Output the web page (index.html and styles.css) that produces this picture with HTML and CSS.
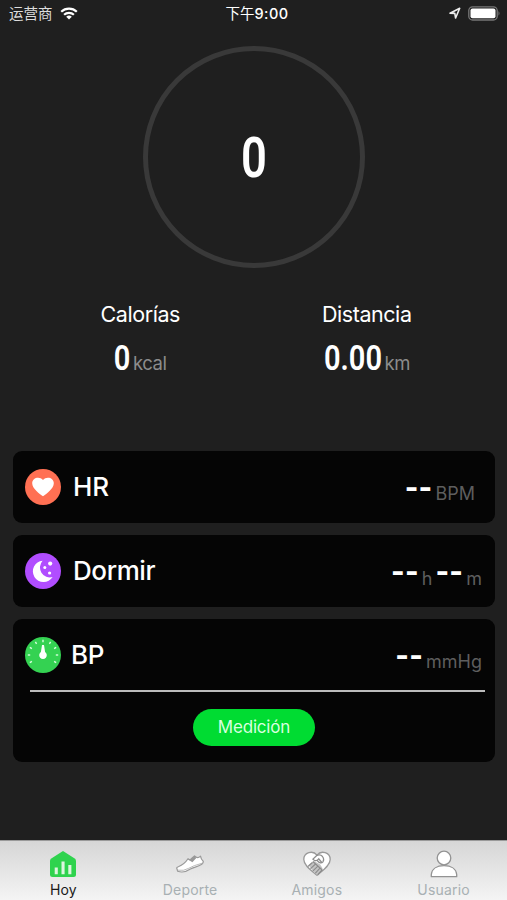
FILE: index.html
```html
<!DOCTYPE html>
<html lang="es">
<head>
<meta charset="utf-8">
<title>Hoy</title>
<link rel="stylesheet" href="styles.css">
</head>
<body>
<div class="screen">
  <header class="status">
    <div class="carrier"><span>运营商</span>
      <svg width="18" height="13" viewBox="0 0 18 13"><g fill="none" stroke="#fff" stroke-width="2.2"><path d="M1.2 4.7A11.2 11.2 0 0 1 16.8 4.7"/><path d="M4.1 7.8A7 7 0 0 1 13.9 7.8"/></g><path d="M6.2 9.8A4 4 0 0 1 11.8 9.8L9 12.6Z" fill="#fff"/></svg>
    </div>
    <div class="time">下午<b>9:00</b></div>
    <div class="power">
      <svg width="12" height="12" viewBox="0 0 12 12"><path d="M1 6.2L10.7 1.3L6.6 11L5.8 6.4Z" fill="none" stroke="#eee" stroke-width="1.6" stroke-linejoin="round"/></svg>
      <svg width="33" height="15" viewBox="0 0 33 15"><rect x=".8" y=".8" width="28.4" height="13.2" rx="3.8" fill="none" stroke="#777" stroke-width="1.3"/><rect x="2.5" y="2.5" width="25" height="9.8" rx="2" fill="#fff"/><path d="M30.5 5Q32.5 7.3 30.5 9.8Z" fill="#777"/></svg>
    </div>
  </header>

  <section class="ring"><span class="steps">0</span></section>

  <section class="stats">
    <div class="stat"><div class="label">Calorías</div><div class="value"><span class="num zero">0</span><span class="unit">kcal</span></div></div>
    <div class="stat"><div class="label">Distancia</div><div class="value"><span class="num dist">0.00</span><span class="unit">km</span></div></div>
  </section>

  <main class="cards">
    <section class="card">
      <div class="row">
        <svg class="badge" viewBox="0 0 36 36"><circle cx="18" cy="18" r="18" fill="#ff7053"/><path d="M18 27.2C14.5 25 7.2 19.5 7.2 14.3C7.2 8.6 14.5 6.8 18 11C21.5 6.8 28.8 8.6 28.8 14.3C28.8 19.5 21.5 25 18 27.2Z" fill="#fff"/></svg>
        <h2>HR</h2>
        <div class="reading bpm"><span class="dash">--</span><span class="measure">BPM</span></div>
      </div>
    </section>
    <section class="card">
      <div class="row">
        <svg class="badge" viewBox="0 0 36 36"><circle cx="18" cy="18" r="18" fill="#b14dff"/><path d="M17.6 7.7A10.7 10.7 0 1 0 27.6 24.1A10 10 0 0 1 17.6 7.7Z" fill="#fff"/><g fill="#fff"><circle cx="25.2" cy="10.6" r="2.1"/><circle cx="19.8" cy="14.5" r="1.5"/><circle cx="24.6" cy="20" r="1.6"/></g></svg>
        <h2 class="sleep">Dormir</h2>
        <div class="reading"><span class="dash">--</span><span class="measure low">h</span><span class="dash second">--</span><span class="measure low">m</span></div>
      </div>
    </section>
    <section class="card tall">
      <div class="row">
        <svg class="badge" viewBox="0 0 36 36"><circle cx="18" cy="18" r="18" fill="#34d252"/><g stroke="#d9ffdf" stroke-width="1.4"><path d="M18 2.8V5.2"/><path d="M18 2.8V5.2" transform="rotate(30 18 18)"/><path d="M18 2.8V5.2" transform="rotate(60 18 18)"/><path d="M18 2.8V5.2" transform="rotate(90 18 18)"/><path d="M18 2.8V5.2" transform="rotate(120 18 18)"/><path d="M18 2.8V5.2" transform="rotate(-30 18 18)"/><path d="M18 2.8V5.2" transform="rotate(-60 18 18)"/><path d="M18 2.8V5.2" transform="rotate(-90 18 18)"/><path d="M18 2.8V5.2" transform="rotate(-120 18 18)"/></g><path d="M17 8H19L20.1 15A3.8 3.8 0 1 1 15.9 15Z" fill="#fff"/></svg>
        <h2 class="bp">BP</h2>
        <div class="reading"><span class="dash">--</span><span class="measure">mmHg</span></div>
      </div>
      <hr>
      <button>Medición</button>
    </section>
  </main>

  <nav class="tabs">
    <a class="tab active"><svg width="28" height="28" viewBox="0 0 28 28"><path d="M14 1L25.7 8.6Q27 9.5 27 11V24.5Q27 27 24.5 27H3.5Q1 27 1 24.5V11Q1 9.5 2.3 8.6Z" fill="#2fd34e"/><path d="M5.7 17.5H8.8V24.3H5.7ZM12.5 11.5H15.6V24.3H12.5ZM19.3 15H22.4V24.3H19.3Z" fill="#ddf6df"/></svg><span>Hoy</span></a>
    <a class="tab"><svg width="28" height="28" viewBox="0 0 28 28"><path d="M1 19Q.2 17.4 2.3 16.7Q8.5 14.2 12 8.7Q13.2 10.3 14.7 9.3L18.5 6Q21.5 9 24.5 6.1Q25 9.3 27.2 11.2Q27.6 13 25.8 14.2C21 17.3 18 16.8 14.4 19.1C10 22.1 5.5 22.6 1.7 21.3Z" fill="#fff" stroke="#999" stroke-width="1.2" stroke-linejoin="round"/><path d="M11.6 9.2Q13 10.5 14.7 9.3L18.5 6L20.3 8L16.4 12.3Z" fill="#999"/><path d="M1.3 20.2Q8 21.2 12.5 18.4T26.8 13" fill="none" stroke="#aaa" stroke-width=".8"/></svg><span>Deporte</span></a>
    <a class="tab"><svg width="28" height="28" viewBox="0 0 28 28"><path d="M14 25.2C8.5 20.7 .8 15.7 .8 9.4C.8 2.6 9.7-.3 14 5.2C18.3-.3 27.2 2.6 27.2 9.4C27.2 15.7 19.5 20.7 14 25.2Z" fill="#fff" stroke="#999" stroke-width="1.3"/><path d="M5.5 15L10.6 10.8L17 14.2L19.7 18.5L14.4 25L10.5 22Z" fill="#c4c4c4"/><g fill="none" stroke="#8c8c8c" stroke-width="1.2" stroke-linecap="round"><path d="M14 5.2L9.8 9.2Q12.8 12.2 15.7 8.8L18.8 12.5M5.5 16L9.2 12.8M7.8 18.4L12 14.5M10.2 20.6L14.6 16.4M12.6 22.8L17 18.2M15 24.5L19 20M10.4 12L19.2 20M14.2 10.5Q17.5 14.5 20 11.8Q21.6 9.3 19.5 6.5Q17.5 4.2 14.5 5.3"/></g></svg><span>Amigos</span></a>
    <a class="tab"><svg width="28" height="28" viewBox="0 0 28 28"><g fill="#fff" stroke="#939393" stroke-width="1.3"><circle cx="14" cy="8" r="6.8"/><path d="M1.3 26.7V24.5C1.8 18.8 7 15.7 14 15.7S26.2 18.8 26.7 24.5V26.7Z" stroke-linejoin="round"/></g></svg><span>Usuario</span></a>
  </nav>
</div>
</body>
</html>
```
FILE: styles.css
```css
* { box-sizing: border-box; }
body { margin: 0; background: #1f1f1f; color: #fff; font-family: Inter, "Noto Sans CJK SC", sans-serif; }
.screen { width: 507px; height: 900px; display: flex; flex-direction: column; overflow: hidden; }

.status { flex: none; height: 46px; padding: 0 6px 18px 9px; display: grid; grid-template-columns: 1fr auto 1fr; align-items: center; font: 14.5px/28px Inter, "Noto Sans CJK SC", sans-serif; }
.carrier { display: flex; align-items: center; gap: 7px; color: #ddd; }
.carrier svg { margin-top: -2px; }
.time { font-size: 14.5px; font-weight: 400; margin-left: 4px; }
.time b { font-weight: 500; letter-spacing: .4px; }
.power { display: flex; justify-content: flex-end; align-items: center; gap: 7px; margin-top: -2px; }

.ring { flex: none; width: 222px; height: 222px; margin-left: 143px; border: 5px solid #393939; border-radius: 50%; display: flex; align-items: center; justify-content: center; }
.steps { font: 600 56px/60px Roboto, sans-serif; transform: scaleX(.81); padding-top: 2px; }

.stats { flex: none; height: 182px; padding: 32px 27px 0; display: grid; grid-template-columns: 1fr 1fr; text-align: center; }
.label { font-size: 21.5px; line-height: 28px; letter-spacing: -.45px; }
.value { display: flex; justify-content: center; align-items: baseline; gap: 3px; margin-top: 11px; }
.num { font: 600 35px/40px Roboto, sans-serif; }
.zero { transform: scaleX(.83); margin: 0 -2px; }
.dist { transform: scaleX(.83); margin: 0 -6px; }
.unit { font-size: 18.5px; letter-spacing: -.5px; color: #8c8c8c; }

.cards { flex: 1; padding: 0 12px 0 13px; display: flex; flex-direction: column; gap: 12px; margin-top: 1px; }
.card { height: 72px; background: #050505; border-radius: 9px; }
.card.tall { height: 143px; }
.row { height: 71px; padding: 0 13px 0 12px; display: flex; align-items: center; }
.badge { width: 36px; height: 36px; flex: none; }
h2 { margin: 1px 0 0 12px; font-size: 26px; line-height: 34px; font-weight: 450; }
.sleep { letter-spacing: -.4px; }
.bp { margin-left: 10px; letter-spacing: -.4px; }
.reading { margin-left: auto; display: flex; align-items: baseline; padding-top: 10px; }
.dash { font: 800 29px/24px Inter, sans-serif; letter-spacing: .2px; margin-right: 3px; position: relative; top: -2px; }
.second { margin-left: 3px; }
.measure { font-size: 18px; line-height: 24px; color: #5e5e5e; }
.low { position: relative; top: 1px; }
.bpm { margin-right: 7px; }
hr { margin: 0 10px 17px 17px; height: 2px; border: 0; background: #bcbcbc; }
button { display: block; width: 122px; height: 37px; margin: 0 0 0 180px; padding: 0; border: 0; border-radius: 19px; background: #00dc32; color: #d8ffdf; font: 17px/37px Inter, sans-serif; letter-spacing: -.2px; }

.tabs { flex: none; height: 60px; display: grid; grid-template-columns: repeat(4, 1fr); background: linear-gradient(#d6d6d6, #f4f4f4); border-top: 1px solid #999; }
.tab { display: flex; flex-direction: column; align-items: center; padding-top: 9px; font-size: 14px; line-height: 18px; letter-spacing: .2px; color: #a8b0b3; }
.tab span { margin-top: 3px; }
.active { color: #191919; }
```
